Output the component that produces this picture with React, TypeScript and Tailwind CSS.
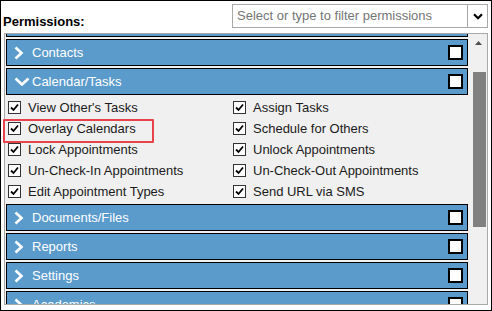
import { Fragment } from "react";

const leftItems = [
  "View Other's Tasks",
  "Overlay Calendars",
  "Lock Appointments",
  "Un-Check-In Appointments",
  "Edit Appointment Types",
];

const rightItems = [
  "Assign Tasks",
  "Schedule for Others",
  "Unlock Appointments",
  "Un-Check-Out Appointments",
  "Send URL via SMS",
];

function ChevronRight() {
  return (
    <svg width="10" height="14" viewBox="0 0 10 14" className="shrink-0">
      <polyline
        points="1.5,1.5 7.5,7 1.5,12.5"
        fill="none"
        stroke="white"
        strokeWidth="2.6"
      />
    </svg>
  );
}

function ChevronDown() {
  return (
    <svg width="16" height="9" viewBox="0 0 16 9" className="shrink-0">
      <polyline
        points="1.5,1.5 8,7.5 14.5,1.5"
        fill="none"
        stroke="white"
        strokeWidth="2.6"
      />
    </svg>
  );
}

function GroupRow({ label, open = false, last = false }: { label: string; open?: boolean; last?: boolean }) {
  return (
    <div
      className={`ml-[1px] mr-[2px] flex h-[27px] shrink-0 items-center border border-black bg-[#5b9bcb] pl-[7px] pr-[4px] ${
        last || open ? "" : "mb-[2px]"
      }`}
    >
      <div className="flex w-[18px] justify-start">{open ? <ChevronDown /> : <ChevronRight />}</div>
      {label && <span className="text-[13px] leading-none text-white">{label}</span>}
      <span className="ml-auto h-[15px] w-[15px] border-2 border-black bg-white" />
    </div>
  );
}

function Check({ label }: { label: string }) {
  return (
    <div className="flex h-[21px] items-center gap-[7px]">
      <span className="flex h-[13px] w-[13px] items-center justify-center border border-[#333] bg-white">
        <svg width="11" height="11" viewBox="0 0 11 11">
          <polyline points="2,5.5 4.5,8 9,2.5" fill="none" stroke="black" strokeWidth="1.8" />
        </svg>
      </span>
      <span className="text-[13px] leading-none text-[#1b1b1b]">{label}</span>
    </div>
  );
}

export default function App() {
  return (
    <div className="relative flex h-[311px] w-[492px] flex-col border border-black bg-white font-['Liberation_Sans',Arial,sans-serif]">
      <header className="flex h-[32px] shrink-0 items-start">
        <span className="ml-[2px] mt-[13px] text-[13px] font-bold leading-[15px] text-black">Permissions:</span>
        <div className="ml-auto mr-[3px] mt-[3px] flex h-[24px] w-[256px] items-center border border-[#a9a9a9] bg-white">
          <span className="flex-1 pl-[4px] text-[13px] text-[#757575]">Select or type to filter permissions</span>
          <div className="flex h-full w-[20px] items-center justify-center border-l border-[#a9a9a9]">
            <svg width="10" height="7" viewBox="0 0 10 7">
              <polyline points="1,1.2 5,5.2 9,1.2" fill="none" stroke="black" strokeWidth="2.2" />
            </svg>
          </div>
        </div>
      </header>

      <div className="ml-[3px] flex h-[272px] w-[484px] border border-[#a9a9a9] bg-[#f0f0f0]">
        <div className="flex flex-1 flex-col overflow-hidden">
          <div className="mt-[-24px] flex flex-col">
            <GroupRow label="" />
            <GroupRow label="Contacts" />
            <GroupRow label="Calendar/Tasks" open />
            <div className="ml-[3px] grid grid-cols-[225px_1fr] pb-[2px] pt-[2px]">
              {leftItems.map((l, i) => (
                <Fragment key={l}>
                  <Check label={l} />
                  <Check label={rightItems[i]} />
                </Fragment>
              ))}
            </div>
            <GroupRow label="Documents/Files" />
            <GroupRow label="Reports" />
            <GroupRow label="Settings" />
            <GroupRow label="Academics" last />
          </div>
        </div>
        <div className="flex w-[17px] shrink-0 flex-col items-center">
          <svg width="7" height="4" viewBox="0 0 7 4" className="mt-[7px]">
            <polygon points="0,4 3.5,0 7,4" fill="#505050" />
          </svg>
          <div className="ml-[1px] mt-[27px] h-[155px] w-[13px] bg-[#808080]" />
        </div>
      </div>

      <div className="absolute left-[2px] top-[118px] h-[24px] w-[151px] rounded-[1px] border-2 border-[#e8434a]" />
    </div>
  );
}
